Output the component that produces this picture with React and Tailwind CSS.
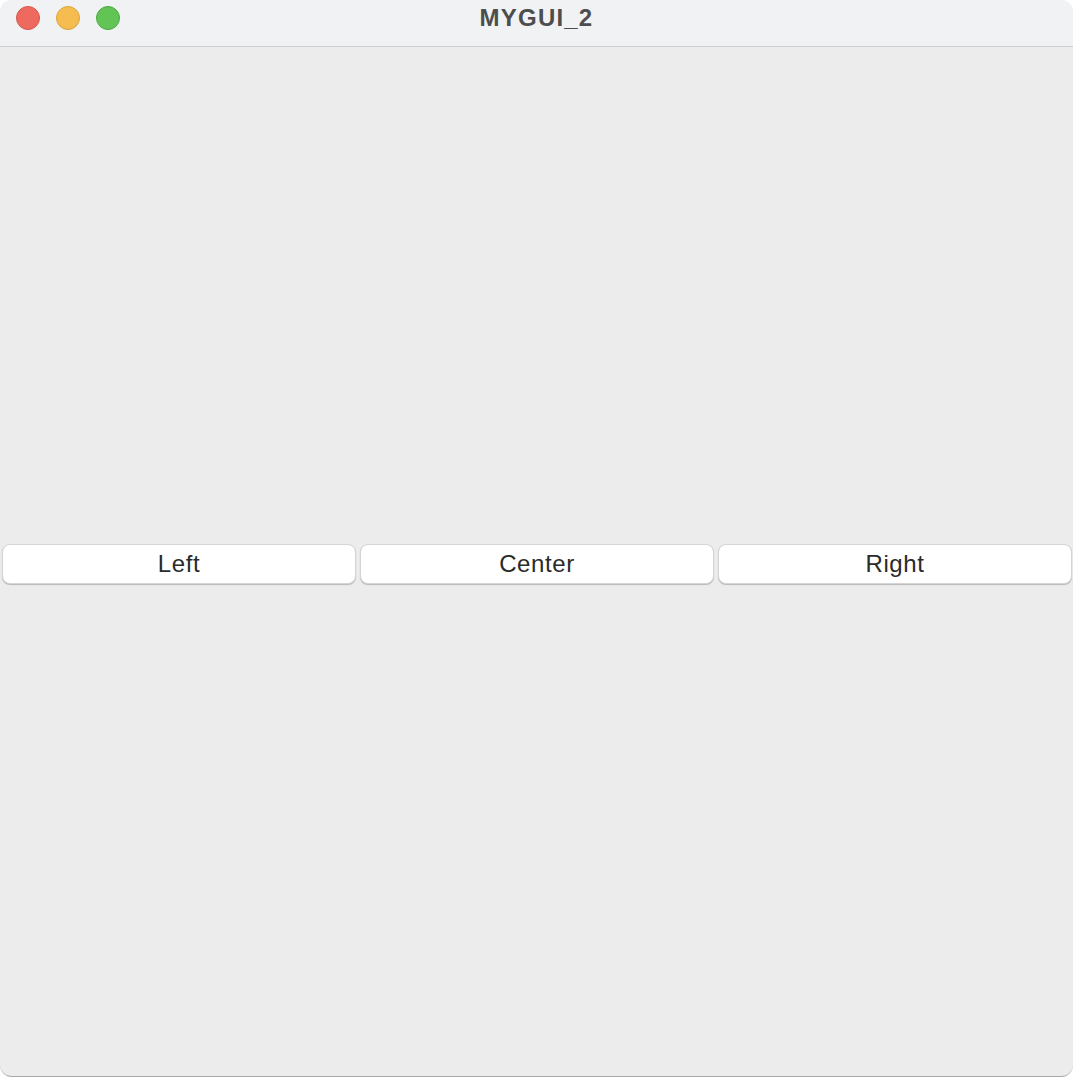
import React from 'react';

const Light = ({ color, ring }) => (
  <span className={`w-[24px] h-[24px] rounded-full border ${color} ${ring}`} />
);

const Btn = ({ label }) => (
  <button className="flex-1 h-[40px] bg-white rounded-[8px] border-[0.5px] border-[#d4d4d4] shadow-[0_1px_1px_rgba(0,0,0,0.22)] text-[24px] tracking-[0.6px] text-[#2a2a2a] leading-none">
    {label}
  </button>
);

export default function App() {
  return (
    <div className="w-[1073px] h-[1077px] bg-white" style={{ fontFamily: '"Liberation Sans", Arial, sans-serif' }}>
      <div className="w-full h-full flex flex-col rounded-[12px] overflow-hidden bg-[#ececec] border-b border-[#a8a8a8]">
        {/* title bar */}
        <div className="relative h-[47px] shrink-0 bg-[#f1f2f4] border-b border-[#cfcfcf] flex items-center">
          <div className="flex items-center gap-[16px] pl-[16px] pb-[10px]">
            <Light color="bg-[#ee6a5f]" ring="border-[#d5564c]" />
            <Light color="bg-[#f5bd4f]" ring="border-[#d9a33a]" />
            <Light color="bg-[#61c454]" ring="border-[#4ca93f]" />
          </div>
          <div className="absolute inset-x-0 top-0 h-[36px] flex items-center justify-center pointer-events-none">
            <span className="text-[24px] font-bold text-[#4d4d4d] tracking-[1.2px]">MYGUI_2</span>
          </div>
        </div>
        {/* content */}
        <div className="flex-1 flex items-center pt-[5px] pl-[2px] pr-[1px]">
          <div className="flex w-full gap-1">
            <Btn label="Left" />
            <Btn label="Center" />
            <Btn label="Right" />
          </div>
        </div>
      </div>
    </div>
  );
}
